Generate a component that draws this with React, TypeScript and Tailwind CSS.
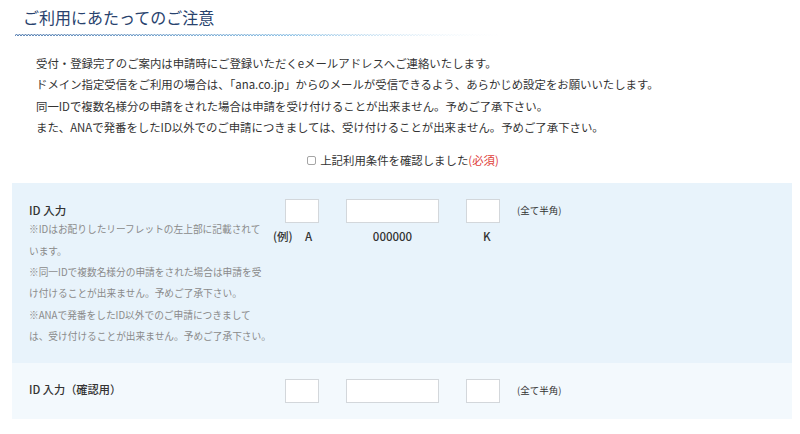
import type { ReactNode } from 'react'

const notice = [
  '受付・登録完了のご案内は申請時にご登録いただくeメールアドレスへご連絡いたします。',
  'ドメイン指定受信をご利用の場合は、「ana.co.jp」からのメールが受信できるよう、あらかじめ設定をお願いいたします。',
  '同一IDで複数名様分の申請をされた場合は申請を受け付けることが出来ません。予めご了承下さい。',
  'また、ANAで発番をしたID以外でのご申請につきましては、受け付けることが出来ません。予めご了承下さい。',
]

const notes = [
  '※IDはお配りしたリーフレットの左上部に記載されて',
  'います。',
  '※同一IDで複数名様分の申請をされた場合は申請を受',
  'け付けることが出来ません。予めご了承下さい。',
  '※ANAで発番をしたID以外でのご申請につきまして',
  'は、受け付けることが出来ません。予めご了承下さい。',
]

// zigzag under the heading
const wave = (() => {
  let d = 'M0 3'
  for (let x = 0; x < 500; x += 3) d += ` L${x + 1.5} 1 L${x + 3} 3`
  return d
})()

function Wave() {
  return (
    <svg width="500" height="4" className="block ml-[15px] mt-[3px]">
      <defs>
        <linearGradient id="wv" x1="0" x2="1" y1="0" y2="0">
          <stop offset="0" stopColor="#4d78ad" />
          <stop offset="0.55" stopColor="#86bde3" />
          <stop offset="1" stopColor="#ffffff" stopOpacity="0" />
        </linearGradient>
      </defs>
      <path d={wave} fill="none" stroke="url(#wv)" strokeWidth="1" />
    </svg>
  )
}

const Box = ({ w }: { w: string }) => (
  <input type="text" className={`${w} h-[24px] bg-white border border-[#d3d7db] outline-none`} />
)

function IdInputs() {
  return (
    <div className="flex items-center pl-[12px]">
      <Box w="w-[34px]" />
      <div className="w-[27px]" />
      <Box w="w-[93px]" />
      <div className="w-[27px]" />
      <Box w="w-[34px]" />
      <span className="ml-[17px] text-[9.5px] text-[#333] leading-[14px] -mt-[2px]">(全て半角)</span>
    </div>
  )
}

function Row({ bg, label, children }: { bg: string; label: ReactNode; children: ReactNode }) {
  return <div className={`${bg} flex`}>{label}{children}</div>
}

export default function App() {
  return (
    <div className="w-[800px] h-[434px] bg-white overflow-hidden font-['Noto_Sans_CJK_JP','Noto_Sans',sans-serif] text-[#333]">
      <h2 className="pt-[8px] pl-[23px] text-[16px] leading-[22px] text-[#28426e] font-['Liberation_Serif','Noto_Sans_CJK_JP',serif] font-normal">
        ご利用にあたってのご注意
      </h2>
      <Wave />

      <div className="pl-[36px] pt-[16px] text-[11.4px] leading-[21.3px]">
        {notice.map(t => <p key={t}>{t}</p>)}
      </div>

      <label className="mt-[12px] flex items-center justify-center gap-[4px] text-[11.4px] leading-[20px] pl-[6px]">
        <input type="checkbox" className="appearance-none w-[9px] h-[9px] border border-[#a5a5a5] rounded-[2px] bg-white" />
        <span>上記利用条件を確認しました<span className="text-[#e0403a]">(必須)</span></span>
      </label>

      <div className="mx-[12px] mt-[13px] w-[780px]">
        <Row
          bg="bg-[#e8f3fb] pt-[18px] pb-[15px]"
          label={
            <div className="pl-[17px] w-[261px] shrink-0">
              <div className="text-[11.5px] leading-[18px] font-medium">ID 入力</div>
              <div className="text-[9.7px] leading-[21.4px] text-[#8a8a8a] whitespace-nowrap">
                {notes.map(t => <p key={t}>{t}</p>)}
              </div>
            </div>
          }
        >
          <div className="-mt-[2px]">
            <IdInputs />
            <div className="flex mt-[4px] text-[11.5px] leading-[18px] font-medium">
              <span className="w-[32px]">(例)</span>
              <span className="w-[41px]">A</span>
              <span className="w-[93px] text-center">000000</span>
              <span className="w-[44px]" />
              <span>K</span>
            </div>
          </div>
        </Row>
        <Row
          bg="bg-[#f3f9fd] h-[56px] items-center"
          label={
            <div className="pl-[17px] w-[261px] shrink-0 text-[11.2px] leading-[18px] font-medium -mt-[3px]">
              ID 入力（確認用）
            </div>
          }
        >
          <IdInputs />
        </Row>
      </div>
    </div>
  )
}
